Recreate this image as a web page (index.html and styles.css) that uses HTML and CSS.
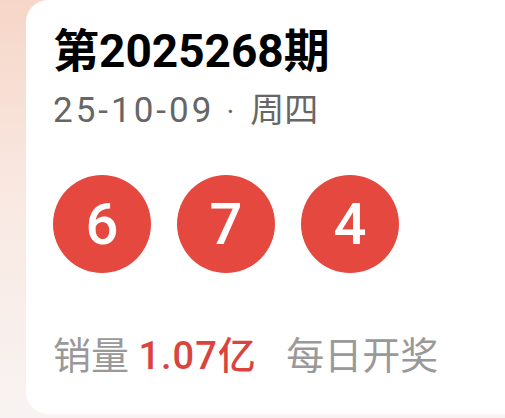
FILE: index.html
```html
<!DOCTYPE html>
<html lang="zh">
<head>
<meta charset="utf-8">
<link rel="stylesheet" href="styles.css">
</head>
<body>
<div class="page">
  <div class="card">
    <div class="title">第2025268期</div>
    <div class="date"><span class="day">25-10-09</span><span class="dot">·</span><span class="week">周四</span></div>
    <div class="balls">
      <div class="ball">6</div>
      <div class="ball">7</div>
      <div class="ball">4</div>
    </div>
    <div class="sales">
      <span class="label">销量</span>
      <span class="amount">1.07亿</span>
      <span class="freq">每日开奖</span>
    </div>
  </div>
</div>
</body>
</html>
```
FILE: styles.css
```css
html, body {
  margin: 0;
  padding: 0;
  width: 505px;
  height: 418px;
  overflow: hidden;
}
body {
  background: linear-gradient(180deg, #f6d6c8 0%, #f9e8e1 45%, #f8f3f2 100%);
  font-family: Roboto, "Noto Sans CJK SC", sans-serif;
}
.page {
  padding-left: 26px;
}
.card {
  box-sizing: border-box;
  height: 414px;
  background: #ffffff;
  border-radius: 22px 0 0 22px;
  padding: 24px 0 0 27px;
}
.title {
  font-size: 46px;
  line-height: 54px;
  font-weight: 700;
  color: #000;
}
.date {
  font-size: 35px;
  line-height: 42px;
  color: #666;
  margin-top: 11px;
  display: flex;
  align-items: baseline;
}
.day {
  letter-spacing: 3px;
}
.dot {
  margin: 0 16px 0 12px;
  font-size: 30px;
}
.week {
  font-size: 34px;
}
.balls {
  display: flex;
  gap: 26px;
  margin-top: 42px;
}
.ball {
  width: 98px;
  height: 98px;
  border-radius: 50%;
  background: #e5483f;
  color: #fff;
  font-size: 58px;
  font-weight: 500;
  display: flex;
  align-items: center;
  justify-content: center;
}
.sales {
  margin-top: 60px;
  font-size: 38px;
  line-height: 46px;
  color: #999;
}
.amount {
  color: #d9443f;
  font-weight: 500;
  letter-spacing: 1px;
}
.freq {
  margin-left: 20px;
}
```
